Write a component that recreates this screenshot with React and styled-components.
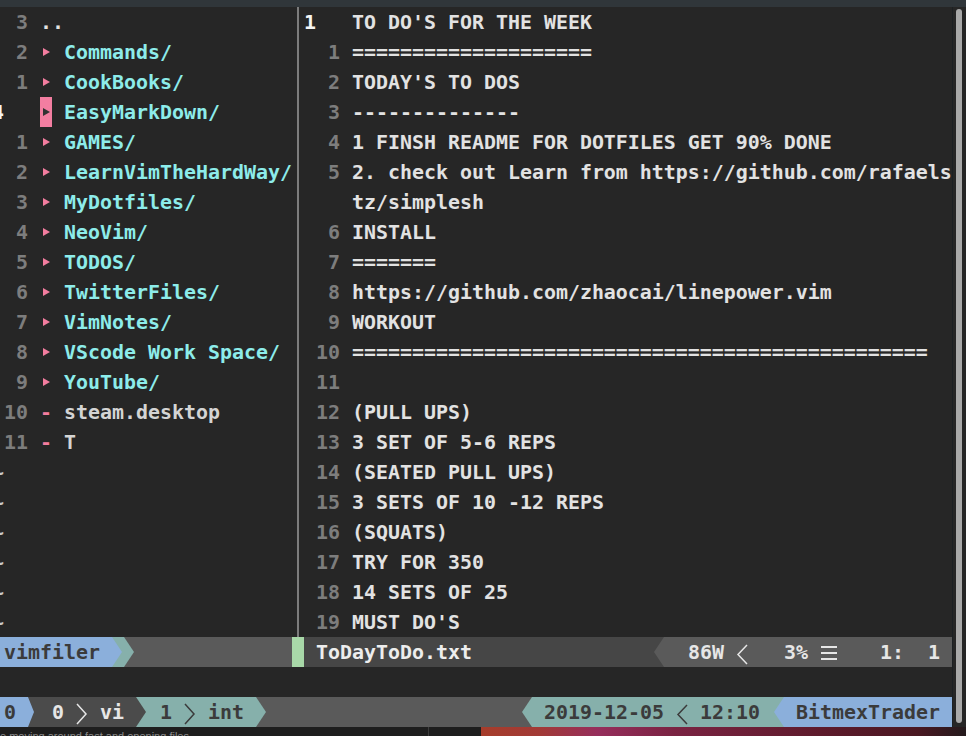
import React from 'react';
import styled, { createGlobalStyle } from 'styled-components';

const BLUE = '#8bafdb';
const TEAL = '#86b0ab';
const GREY = '#5a5a5a';
const DARK = '#464646';
const TMUX_DARK = '#4b4b4b';
const INK = '#3b3b3b';
const LIGHT = '#e6e6e6';

const GlobalStyle = createGlobalStyle`
  html, body {
    margin: 0;
    padding: 0;
    background: #262626;
    overflow: hidden;
  }
`;

const Screen = styled.div`
  width: 966px;
  height: 736px;
  overflow: hidden;
  display: flex;
  flex-direction: column;
  background: #1f1f1f;
`;

const Window = styled.div`
  height: 727px;
  display: flex;
  flex-direction: column;
  background: #262626;
  flex-shrink: 0;
`;

const TitleStrip = styled.div`
  height: 7px;
  background: #30363a;
  flex-shrink: 0;
`;

const WindowBody = styled.div`
  flex: 1;
  display: flex;
  overflow: hidden;
`;

const Terminal = styled.div`
  width: 960px;
  margin-left: -8px;
  flex-shrink: 0;
  font-family: "DejaVu Sans Mono", "Liberation Mono", monospace;
  font-weight: bold;
  font-size: 19.93px;
  line-height: 32px;
  white-space: pre;
  color: ${LIGHT};
  overflow: hidden;
`;

const Gutter = styled.div`
  width: 13px;
  border-left: 1px solid #1c2023;
  padding: 2px 0 4px 3px;
  box-sizing: border-box;
  display: flex;
`;

const Thumb = styled.div`
  width: 6px;
  background: #a9a9a9;
  border-radius: 3px;
`;

const Panes = styled.div`
  display: flex;
  height: 630px;
`;

const LeftPane = styled.div`
  width: 300px;
  flex-shrink: 0;
  overflow: hidden;
`;

const Divider = styled.div`
  width: 12px;
  flex-shrink: 0;
  background: linear-gradient(to right, transparent 5px, #7c7c7c 5px, #7c7c7c 7px, transparent 7px);
`;

const RightPane = styled.div`
  width: 648px;
  flex-shrink: 0;
  overflow: hidden;
`;

const Row = styled.div`
  display: flex;
  height: 30px;
  background: ${p => p.$bg || 'transparent'};
`;

const Num = styled.span`
  width: 36px;
  flex-shrink: 0;
  text-align: ${p => (p.$current ? 'left' : 'right')};
  color: ${p => (p.$current ? '#f4f4f4' : '#7d7d7d')};
`;

const Space = styled.span`
  width: ${p => (p.$cols || 1) * 12}px;
  flex-shrink: 0;
`;

const Marker = styled.span`
  width: 12px;
  height: 30px;
  flex-shrink: 0;
  display: flex;
  justify-content: center;
  background: ${p => (p.$active ? '#f37ea1' : 'transparent')};
  color: #f37d9f;
`;

const Name = styled.span`
  color: ${p => (p.$dir ? '#8decea' : '#d4d4d4')};
`;

const Tilde = styled.span`
  color: #c8c8c8;
`;

const Text = styled.span`
  color: #e2e2e2;
`;

const Seg = styled.div`
  width: ${p => p.$cols * 12}px;
  flex-shrink: 0;
  display: flex;
  align-items: flex-start;
  background: ${p => p.$bg};
  color: ${p => p.$fg || LIGHT};
`;

const Fill = styled.div`
  flex: 1;
  background: ${p => p.$bg};
`;

const Glyph = styled.span`
  width: 12px;
  height: 30px;
  flex-shrink: 0;
  display: inline-flex;
  overflow: visible;

  & > svg {
    flex-shrink: 0;
    overflow: visible;
  }
`;

const Desktop = styled.div`
  height: 9px;
  display: flex;
  overflow: hidden;
  background: #1e1e1e;
`;

const Caption = styled.div`
  width: 429px;
  box-sizing: border-box;
  border-right: 1px solid #3c3c3c;
  padding-top: 3px;
  font-family: "Liberation Sans", sans-serif;
  font-size: 11px;
  line-height: 13px;
  color: #8a8a8a;
  white-space: nowrap;
  overflow: hidden;
`;

const DesktopGap = styled.div`
  width: 52px;
`;

const Wallpaper = styled.div`
  flex: 1;
  background: linear-gradient(to right, #a63d2b 0%, #a23a36 12%, #962e5c 24%, #7a2342 40%, #5e1b2c 70%, #4a1822 90%, #241a1c 100%);
`;

/* powerline pieces */
const Arrow = ({ tri, bg, dir = 'right', w = 10 }) => (
  <Glyph style={{ background: bg }}>
    <svg width="12" height="30" viewBox="0 0 12 30">
      {dir === 'right'
        ? <polygon points={`0,0 ${w},15 0,30`} fill={tri} />
        : <polygon points={`12,0 ${12 - w},15 12,30`} fill={tri} />}
    </svg>
  </Glyph>
);

const Chevron = ({ dir = 'left', color = LIGHT }) => (
  <Glyph>
    <svg width="12" height="30" viewBox="0 0 12 30">
      <polyline
        points={dir === 'left' ? '11,8 2,17.5 11,27' : '1,7 10,17 1,27'}
        fill="none"
        stroke={color}
        strokeWidth="1.5"
      />
    </svg>
  </Glyph>
);

const Menu = () => (
  <Glyph>
    <svg width="18" height="30" viewBox="0 0 18 30">
      <rect x="1" y="9" width="16" height="2" fill={LIGHT} />
      <rect x="1" y="15" width="16" height="2" fill={LIGHT} />
      <rect x="1" y="21" width="16" height="2" fill={LIGHT} />
    </svg>
  </Glyph>
);

const Play = ({ color }) => (
  <svg width="12" height="30" viewBox="0 0 12 30">
    <polygon points="3,11 10,15 3,19" fill={color} />
  </svg>
);

const files = [
  { n: '2', name: 'Commands/', dir: true },
  { n: '1', name: 'CookBooks/', dir: true },
  { n: '4', name: 'EasyMarkDown/', dir: true, current: true },
  { n: '1', name: 'GAMES/', dir: true },
  { n: '2', name: 'LearnVimTheHardWay/', dir: true },
  { n: '3', name: 'MyDotfiles/', dir: true },
  { n: '4', name: 'NeoVim/', dir: true },
  { n: '5', name: 'TODOS/', dir: true },
  { n: '6', name: 'TwitterFiles/', dir: true },
  { n: '7', name: 'VimNotes/', dir: true },
  { n: '8', name: 'VScode Work Space/', dir: true },
  { n: '9', name: 'YouTube/', dir: true },
  { n: '10', name: 'steam.desktop' },
  { n: '11', name: 'T' },
];

const lines = [
  { n: '1', text: "TO DO'S FOR THE WEEK", current: true },
  { n: '1', text: '====================' },
  { n: '2', text: "TODAY'S TO DOS" },
  { n: '3', text: '--------------' },
  { n: '4', text: '1 FINSH README FOR DOTFILES GET 90% DONE' },
  { n: '5', text: '2. check out Learn from https://github.com/rafaels' },
  { n: '', text: 'tz/simplesh' },
  { n: '6', text: 'INSTALL' },
  { n: '7', text: '=======' },
  { n: '8', text: 'https://github.com/zhaocai/linepower.vim' },
  { n: '9', text: 'WORKOUT' },
  { n: '10', text: '================================================' },
  { n: '11', text: '' },
  { n: '12', text: '(PULL UPS)' },
  { n: '13', text: '3 SET OF 5-6 REPS' },
  { n: '14', text: '(SEATED PULL UPS)' },
  { n: '15', text: '3 SETS OF 10 -12 REPS' },
  { n: '16', text: '(SQUATS)' },
  { n: '17', text: 'TRY FOR 350' },
  { n: '18', text: '14 SETS OF 25' },
  { n: '19', text: "MUST DO'S" },
];

const FileTree = () => (
  <LeftPane>
    <Row>
      <Num>3</Num>
      <Space />
      <Text>..</Text>
    </Row>
    {files.map((f, i) => (
      <Row key={i}>
        <Num $current={f.current}>{f.n}</Num>
        <Space />
        <Marker $active={f.current}>
          {f.dir ? <Play color={f.current ? '#333' : '#f37d9f'} /> : '-'}
        </Marker>
        <Space />
        <Name $dir={f.dir}>{f.name}</Name>
      </Row>
    ))}
    {Array.from({ length: 6 }).map((_, i) => (
      <Row key={'t' + i}>
        <Tilde>~</Tilde>
      </Row>
    ))}
  </LeftPane>
);

const Editor = () => (
  <RightPane>
    {lines.map((l, i) => (
      <Row key={i}>
        <Num $current={l.current}>{l.n}</Num>
        <Space />
        <Text>{l.text}</Text>
      </Row>
    ))}
  </RightPane>
);

const StatusLine = () => (
  <Row>
    <Seg $cols={10} $bg={BLUE} $fg={INK}>{' vimfiler '}</Seg>
    <Arrow tri={BLUE} bg={TEAL} />
    <Arrow tri={TEAL} bg={GREY} />
    <Seg $cols={13} $bg={GREY} />
    <Seg $cols={1} $bg="#a8d8a8" />
    <Seg $cols={29} $bg={DARK} $fg="#ededed">{' ToDayToDo.txt'}</Seg>
    <Arrow tri={GREY} bg={DARK} dir="left" />
    <Seg $cols={24} $bg={GREY}>
      {'  86W '}
      <Chevron />
      {'   3% '}
      <Menu />
      {'    1:  1 '}
    </Seg>
  </Row>
);

const TmuxBar = () => (
  <Row $bg={GREY}>
    <Seg $cols={3} $bg={BLUE} $fg={INK}>{' 0 '}</Seg>
    <Arrow tri={BLUE} bg={TMUX_DARK} w={6} />
    <Seg $cols={8} $bg={TMUX_DARK}>
      {' 0 '}
      <Chevron dir="right" />
      {' vi '}
    </Seg>
    <Arrow tri={TMUX_DARK} bg={TEAL} />
    <Seg $cols={9} $bg={TEAL} $fg={INK}>
      {' 1 '}
      <Chevron dir="right" color={INK} />
      {' int '}
    </Seg>
    <Arrow tri={TEAL} bg={GREY} />
    <Fill $bg={GREY} />
    <Arrow tri={TEAL} bg={GREY} dir="left" />
    <Seg $cols={20} $bg={TEAL} $fg={INK}>
      {' 2019-12-05 '}
      <Chevron color={INK} />
      {' 12:10 '}
    </Seg>
    <Arrow tri={BLUE} bg={TEAL} dir="left" />
    <Seg $cols={14} $bg={BLUE} $fg={INK}>{' BitmexTrader '}</Seg>
  </Row>
);

export default function App() {
  return (
    <Screen>
      <GlobalStyle />
      <Window>
        <TitleStrip />
        <WindowBody>
          <Terminal>
            <Panes>
              <FileTree />
              <Divider />
              <Editor />
            </Panes>
            <StatusLine />
            <Row />
            <TmuxBar />
          </Terminal>
          <Gutter>
            <Thumb />
          </Gutter>
        </WindowBody>
      </Window>
      <Desktop>
        <Caption>e moving around fast and opening files</Caption>
        <DesktopGap />
        <Wallpaper />
      </Desktop>
    </Screen>
  );
}
